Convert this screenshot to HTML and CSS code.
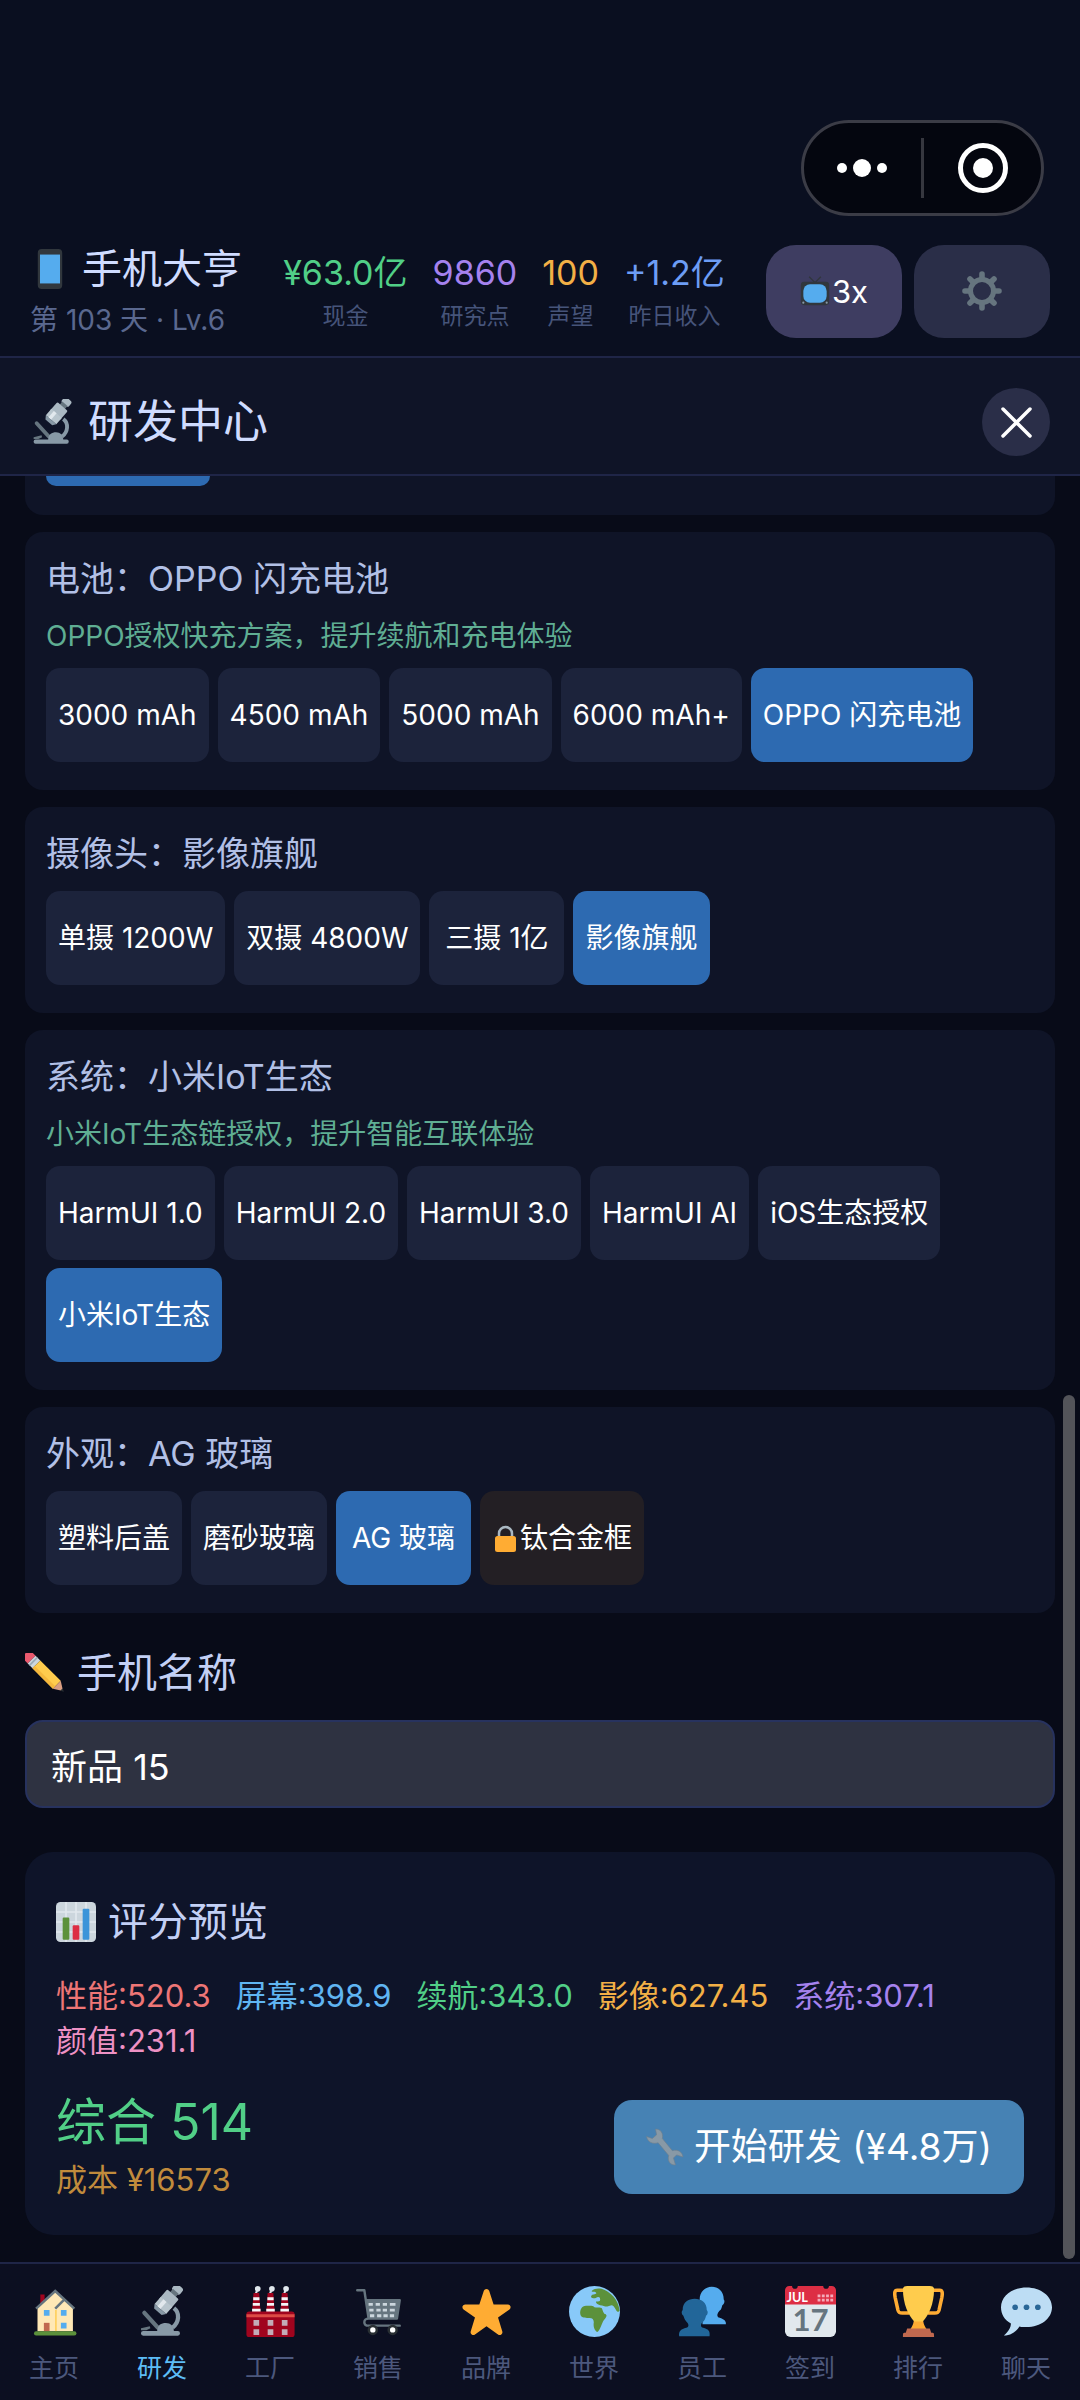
FILE: index.html
```
<!DOCTYPE html>
<html lang="zh-CN">
<head>
    <meta charset="UTF-8">
    <meta name="viewport" content="width=device-width, initial-scale=1.0">
    <title>手机大亨</title>
    <link rel="stylesheet" href="styles.css">
</head>
<body>
    <!-- Shared emoji symbols -->
    <svg class="sprite" aria-hidden="true">
        <symbol id="microscope" viewBox="-2 -1 38 38">
            <path fill="none" stroke="#8899a6" stroke-width="3.2" d="M25.5 15.5c4.6 3.6 4 10.4-1 14.5"/>
            <path stroke="#66757f" stroke-width="3.2" stroke-linecap="round" d="M3.5 19l10 11"/>
            <path fill="#66757f" d="M1 30.5l6.5-1.5.5 1.5-3 1.5H1z"/>
            <path fill="#8899a6" d="M13 33c0-5 3-6.500 6.500-6.500s6 2.500 6 6.500z"/>
            <rect x="1" y="32.5" width="29" height="3.500" rx="1.600" fill="#8899a6"/>
            <g transform="rotate(41 19 12)">
                <rect x="15.2" y="-5" width="7.600" height="6" rx="2" fill="#aab8c2"/>
                <rect x="16.2" y="0" width="5.600" height="4" fill="#66757f"/>
                <rect x="13.3" y="3" width="11.400" height="10" rx="1" fill="#aab8c2"/>
                <rect x="13.3" y="10.5" width="11.400" height="7" fill="#b8c5cd"/>
                <path fill="#e1e8ed" d="M16 10.500h3v7h-3z"/>
                <path fill="#8899a6" d="M13.300 17.500h11.400l-2 2.800h-7.400z"/>
            </g>
        </symbol>
    </svg>

    <div class="app">
        <header class="top">
            <div class="capsule">
                <button class="capsule-btn" aria-label="更多">
                    <svg width="54" height="24" viewBox="0 0 54 24" fill="#fff"><circle cx="6" cy="12" r="5"/><circle cx="26" cy="12" r="9"/><circle cx="46" cy="12" r="5"/></svg>
                </button>
                <span class="capsule-line"></span>
                <button class="capsule-btn" aria-label="退出">
                    <svg width="52" height="52" viewBox="0 0 52 52"><circle cx="26" cy="26" r="22.500" fill="none" stroke="#fff" stroke-width="5"/><circle cx="26" cy="26" r="10" fill="#fff"/></svg>
                </button>
            </div>
            <div class="status">
                <div class="brand">
                    <h1>
                        <svg class="icon-title" viewBox="0 0 36 36"><rect x="7" y="0" width="22" height="36" rx="3.500" fill="#31373d"/><path fill="#55acee" d="M9 5h18v26H9z"/></svg>
                        手机大亨
                    </h1>
                    <p>第 103 天 · Lv.6</p>
                </div>
                <div class="stats">
                    <div class="stat"><b class="green">¥63.0亿</b><span>现金</span></div>
                    <div class="stat"><b class="purple">9860</b><span>研究点</span></div>
                    <div class="stat"><b class="orange">100</b><span>声望</span></div>
                    <div class="stat"><b class="blue">+1.2亿</b><span>昨日收入</span></div>
                </div>
                <div class="tools">
                    <button class="tool speed">
                        <svg class="icon-small" viewBox="0 0 36 36"><path fill="none" stroke="#31373d" stroke-width="1.600" d="M11 1l7 7 7-7"/><rect x="1" y="7" width="34" height="28" rx="4" fill="#31373d"/><rect x="4" y="10" width="28" height="22" rx="8" fill="#55acee"/><circle cx="4" cy="32" r="1.300" fill="#8899a6"/><circle cx="32" cy="32" r="1.300" fill="#8899a6"/></svg>3x
                    </button>
                    <button class="tool" aria-label="设置">
                        <svg class="icon-gear" viewBox="0 0 40 40" stroke="#66757f" fill="none"><circle cx="20" cy="20" r="11.500" stroke-width="5"/><g stroke-width="5.600" stroke-linecap="round"><path d="M20 7V3M20 33v4M7 20H3M33 20h4M10.800 10.800L8 8M29.200 29.200L32 32M10.800 29.200L8 32M29.200 10.800L32 8"/></g></svg>
                    </button>
                </div>
            </div>
        </header>

        <div class="panel-head">
            <h2><svg class="icon-head"><use href="#microscope"/></svg>研发中心</h2>
            <button class="close" aria-label="关闭">
                <svg width="32" height="32" viewBox="0 0 32 32" stroke="#fff" stroke-width="3.500" stroke-linecap="round"><path d="M3 3l27 27M30 3L3 30"/></svg>
            </button>
        </div>

        <main class="content">
            <div class="card card-cut"><div class="chip-cut"></div></div>

            <section class="card">
                <h3>电池：OPPO 闪充电池</h3>
                <p class="desc">OPPO授权快充方案，提升续航和充电体验</p>
                <div class="chips">
                    <button class="chip">3000 mAh</button>
                    <button class="chip">4500 mAh</button>
                    <button class="chip">5000 mAh</button>
                    <button class="chip">6000 mAh+</button>
                    <button class="chip active">OPPO 闪充电池</button>
                </div>
            </section>

            <section class="card">
                <h3>摄像头：影像旗舰</h3>
                <div class="chips">
                    <button class="chip">单摄 1200W</button>
                    <button class="chip">双摄 4800W</button>
                    <button class="chip">三摄 1亿</button>
                    <button class="chip active">影像旗舰</button>
                </div>
            </section>

            <section class="card">
                <h3>系统：小米IoT生态</h3>
                <p class="desc">小米IoT生态链授权，提升智能互联体验</p>
                <div class="chips">
                    <button class="chip">HarmUI 1.0</button>
                    <button class="chip">HarmUI 2.0</button>
                    <button class="chip">HarmUI 3.0</button>
                    <button class="chip">HarmUI AI</button>
                    <button class="chip">iOS生态授权</button>
                    <button class="chip active">小米IoT生态</button>
                </div>
            </section>

            <section class="card">
                <h3>外观：AG 玻璃</h3>
                <div class="chips">
                    <button class="chip">塑料后盖</button>
                    <button class="chip">磨砂玻璃</button>
                    <button class="chip active">AG 玻璃</button>
                    <button class="chip locked">
                        <svg class="icon-lock" viewBox="0 0 28 28"><path fill="none" stroke="#aab8c2" stroke-width="2.500" d="M7 14V9.500a6.500 6.500 0 0 1 13 0V14"/><rect x="3" y="12" width="21" height="16" rx="2.500" fill="#ffac33"/></svg>钛合金框
                    </button>
                </div>
            </section>

            <label class="section-title" for="phone-name">
                <svg class="icon-section" viewBox="0 0 36 36"><g transform="rotate(45 18 18)"><path fill="#ea596e" d="M-4 13h5v10h-5a3 3 0 0 1-3-3v-4a3 3 0 0 1 3-3z"/><path fill="#ccd6dd" d="M1 13h6v10H1z"/><path fill="#99aab5" d="M2.500 13H4v10H2.500z"/><path fill="#ffcc4d" d="M7 13h26v10H7z"/><path fill="#f5b83d" d="M7 20h26v3H7z"/><path fill="#d99e82" d="M33 13l8 5-8 5z"/><path fill="#292f33" d="M39 16.500l3 1.500-3 1.500z"/></g></svg>
                手机名称
            </label>
            <input id="phone-name" class="name-input" type="text" value="新品 15">

            <section class="score">
                <h2 class="section-title">
                    <svg class="icon-section" viewBox="0 0 36 36"><rect width="36" height="36" rx="4" fill="#ccd6dd"/><path stroke="#e1e8ed" stroke-width="1.500" d="M0 9h36M0 18h36M0 27h36M9 0v36M18 0v36M27 0v36"/><rect x="6" y="14" width="6" height="20" rx="1" fill="#5c913b"/><rect x="15" y="21" width="6" height="13" rx="1" fill="#dd2e44"/><rect x="24" y="6" width="6" height="28" rx="1" fill="#3b94d9"/></svg>
                    评分预览
                </h2>
                <div class="scores">
                    <span class="red">性能:520.3</span>
                    <span class="sky">屏幕:398.9</span>
                    <span class="green">续航:343.0</span>
                    <span class="orange">影像:627.45</span>
                    <span class="purple">系统:307.1</span>
                    <span class="pink">颜值:231.1</span>
                </div>
                <div class="score-foot">
                    <div>
                        <div class="total">综合 514</div>
                        <div class="cost">成本 ¥16573</div>
                    </div>
                    <button class="start">
                        <svg class="icon-wrench" viewBox="0 0 36 36"><path fill="#8899a6" stroke="#6e7f8d" stroke-width=".6" d="M9 1c5 0 7.500 4 6.500 9l9.500 11.500c5-1.500 9.500 1 10 6l-6-2-3 3 2 6.500c-5 .5-8-4-6.500-9L11.500 14C6.500 15.500 1.500 13.500.5 8l5.500 2 4-3.500z"/></svg>
                        开始研发 (¥4.8万)
                    </button>
                </div>
            </section>
            <span class="scroll-thumb"></span>
        </main>

        <nav class="tabs">
            <a href="#home" class="tab">
                <svg viewBox="0 0 36 36"><path fill="#a0041e" d="M8 6h3v7H8z"/><path fill="#ffe8b6" d="M6 15L18.500 3.500 31 15v17H6z"/><path fill="#ffcc4d" d="M18.500 17h1v15h-1z"/><path fill="none" stroke="#66757f" stroke-width="1.800" d="M5 16L18.500 3.500 32 16M18.500 16l6-6"/><path fill="#55acee" d="M10.500 17h4v4h-4zM22.500 17h4v4h-4zM22.500 26h4v4h-4z"/><path fill="#c1694f" d="M10.500 26h4v6h-4z"/><rect x="3.500" y="32" width="30" height="3" rx="1.500" fill="#5c913b"/></svg>
                主页
            </a>
            <a href="#research" class="tab current"><svg><use href="#microscope"/></svg>研发</a>
            <a href="#factory" class="tab">
                <svg viewBox="0 0 36 36"><g fill="#e1e8ed"><circle cx="9" cy="2" r="2"/><circle cx="19" cy="2" r="2"/><circle cx="29" cy="2" r="2"/></g><g stroke="#e1e8ed" stroke-width="1.500"><path d="M8.500 3l-1 3M18.500 3l-1 3M28.500 3l-1 3"/></g><g fill="#a0041e"><path d="M6 5h4l1 14H5zM16 5h4l1 14h-6zM26 5h4l1 14h-6z"/><rect x="1" y="18" width="34" height="18" rx="2"/></g><path fill="#f4f7f9" d="M5.800 8h4.400v2H5.800zM5.500 12h5v2h-5zM5 16h6v2H5zM15.800 8h4.400v2h-4.400zM15.500 12h5v2h-5zM15 16h6v2h-6zM25.800 8h4.400v2h-4.400zM25.500 12h5v2h-5zM25 16h6v2h-6z"/><path fill="#dd4b45" d="M1 20h34v2H1z"/><path fill="#ccd6dd" opacity=".8" d="M6 24h4v4H6zM16 24h4v4h-4zM26 24h4v4h-4zM6 30.500h4v4H6zM16 30.500h4v4h-4zM26 30.500h4v4h-4z"/></svg>
                工厂
            </a>
            <a href="#sales" class="tab">
                <svg viewBox="0 0 36 36"><path fill="none" stroke="#66757f" stroke-width="1.700" stroke-linecap="round" stroke-linejoin="round" d="M3 3h5l3 20M9 10h24l-2 13H11c-4 0-4 5 0 5h22"/><path fill="#66757f" d="M9 10h24l-2 13H11z"/><g fill="#ccd6dd"><path d="M11 12h3v2h-3zM16 12h3v2h-3zM21 12h3v2h-3zM26 12h4v2h-4zM11.500 16h3v2h-3zM16.500 16h3v2h-3zM21 16h3v2h-3zM26 16h3.500v2H26zM12 20h3v2h-3zM17 20h3v2h-3zM21.500 20h3v2h-3zM26 20h3v2h-3z"/></g><circle cx="14" cy="31" r="2.800" fill="#fff" stroke="#292f33" stroke-width="1.800"/><circle cx="28" cy="31" r="2.800" fill="#fff" stroke="#292f33" stroke-width="1.800"/></svg>
                销售
            </a>
            <a href="#brand" class="tab">
                <svg viewBox="0 0 36 36"><path fill="#ffac33" d="M27.287 34.627c-.404 0-.806-.124-1.152-.371L18 28.422l-8.135 5.834c-.343.247-.746.371-1.148.371-.408 0-.818-.127-1.165-.383-.693-.504-.98-1.395-.719-2.210l3.034-9.792-8.062-5.681c-.685-.505-.97-1.393-.708-2.203.264-.809 1.016-1.357 1.866-1.363L12.947 12.980l3.179-9.549c.268-.809 1.023-1.353 1.874-1.353.851 0 1.606.545 1.875 1.353L23 13l10.036-.005c.853.006 1.606.554 1.868 1.363.263.81-.022 1.698-.708 2.203l-8.062 5.681 3.034 9.792c.26.815-.027 1.706-.72 2.210-.346.256-.757.383-1.161.383z"/></svg>
                品牌
            </a>
            <a href="#world" class="tab">
                <svg viewBox="0 0 36 36"><circle cx="18" cy="18" r="18" fill="#88c9f9"/><path fill="#5c913b" d="M16 3.500c2-2 5-2 7-1.500 6 2 12 7.500 12.700 15.500-.7 1.500-2 .5-2.700-1-1-2-2-3-3-3l-3 1c-2 0-3-1-5-1-2-.5-3-1-3-2.500 2 0 3 0 3-1.500s-1-2-2-1.500-2 1-3.500.5-1-2 .5-2.500 3-.5 2-1.500-3.500 0-3-1zM12 14c2 0 5-.5 6 1 1 .5 3 0 5 .5 1 1.500 1 4 3 4.500 1.500 1-.5 3-2 5-1 2-2 6-4 7.500-2-1-3-4-2.500-7 0-2-1-3-3-3s-6 .500-6.500-2.500S9 14 12 14z"/><path fill="none" stroke="#88c9f9" stroke-width="1.300" stroke-linecap="round" d="M24 15l3 5 3-1 1-3"/></svg>
                世界
            </a>
            <a href="#staff" class="tab">
                <svg viewBox="0 0 36 36"><path fill="#55acee" d="M34.500 27c.5-3-2.500-4-5.500-5-1-1-.5-3 1-4.500 1.500-1 1.500-2.500 2-4 1.500-1 2-3 1-4C33 3.500 29 .5 24.500.5S16 4 16 9.500s0 6 2 8V27z"/><path fill="#226699" d="M1.500 35.500c-.5-4 1.500-5 5-6 2-.5 2-2.500.5-4-1.500-1.500-2-3-2.500-4.500-1.500-1-1.500-3-.5-4C4 11.500 8 9 12.500 9s8.500 2.500 8.500 8c1 1 1 3-.5 4-.5 2-1 3.500-2.500 4.500-1.500 1.500-1.500 3.500.5 4 3.500 1 5 2 4.500 6z"/></svg>
                员工
            </a>
            <a href="#signin" class="tab">
                <svg viewBox="0 0 36 36"><path fill="#e1e8ed" d="M0 12h36v20a4 4 0 0 1-4 4H4a4 4 0 0 1-4-4z"/><path fill="#dd2e44" d="M3 0h2a2 2 0 0 0 4 0h18a2 2 0 0 0 4 0h2a3 3 0 0 1 3 3v10H0V3a3 3 0 0 1 3-3z"/><g fill="#f4abba"><path d="M23 6h2v2h-2zM26 6h2v2h-2zM29 6h2v2h-2zM32 6h2v2h-2zM23 9h2v2h-2zM26 9h2v2h-2zM29 9h2v2h-2zM32 9h2v2h-2z"/></g><text class="cal-month" x="1" y="11">JUL</text><text class="cal-day" x="18" y="32">17</text></svg>
                签到
            </a>
            <a href="#rank" class="tab">
                <svg viewBox="0 0 36 36"><path fill="none" stroke="#ffac33" stroke-width="2.500" stroke-linejoin="round" d="M9 3H3c-2 0-2 2-1.500 5l2 9c.5 2 1.500 2 3 2h5M27 3h6c2 0 2 2 1.500 5l-2 9c-.5 2-1.500 2-3 2h-5"/><path fill="#ffac33" d="M15 20h6c0 6 1 8 3 11H12c2-3 3-5 3-11z"/><path fill="#ffcc4d" d="M7 2c0-1 1-2 3-2h16c2 0 3 1 3 2 0 11-4 19-8 23h-6C11 21 7 13 7 2z"/><path fill="#c1694f" d="M10 30h16l1 3h1c1 0 1 1 1 3H7c0-2 0-3 1-3h1z"/></svg>
                排行
            </a>
            <a href="#chat" class="tab">
                <svg viewBox="0 0 36 36"><path fill="#bdddf4" d="M18 1C8 1 0 7 0 15c0 5 2.500 9 7 11.500 0 3-2 6-5 8.500 5 0 9-3 11-6.500 2 .5 3 .5 5 .5 10 0 18-6 18-14S28 1 18 1z"/><g fill="#2a6797"><circle cx="10" cy="15" r="2"/><circle cx="18" cy="15" r="2"/><circle cx="26" cy="15" r="2"/></g></svg>
                聊天
            </a>
        </nav>
    </div>
</body>
</html>
```
FILE: styles.css
```
* {
    box-sizing: border-box;
}
body {
    margin: 0;
    background: #080b18;
    color: #fff;
    font-family: Inter, "Noto Sans CJK SC", sans-serif;
    font-weight: 400;
}
h1, h2, h3, p {
    margin: 0;
    font-weight: 400;
}
button, input {
    font: inherit;
    color: inherit;
    border: none;
}
button {
    cursor: pointer;
}
svg {
    flex-shrink: 0;
}
.sprite {
    position: absolute;
    width: 0;
    height: 0;
}
.app {
    min-height: 100vh;
    display: flex;
    flex-direction: column;
}

/* top bar */
.top {
    padding: 120px 30px 14px;
    background: #0a0f20;
    border-bottom: 2px solid #1f2547;
}
.capsule {
    width: 243px;
    height: 96px;
    margin: 0 6px 24px auto;
    display: flex;
    align-items: center;
    background: #04060f;
    border: 3px solid #3b3c46;
    border-radius: 48px;
}
.capsule-btn {
    flex: 1;
    display: flex;
    justify-content: center;
    padding: 0;
    background: none;
}
.capsule-line {
    width: 3px;
    height: 60px;
    background: #36373f;
}
.status {
    display: flex;
    align-items: center;
    justify-content: space-between;
}
.brand h1 {
    display: flex;
    align-items: center;
    gap: 12px;
    font-size: 40px;
    line-height: 58px;
    color: #cfdcff;
}
.icon-title {
    width: 40px;
    height: 40px;
}
.brand p {
    font-size: 28px;
    line-height: 44px;
    color: #5a688f;
}
.stats {
    display: flex;
    gap: 25px;
}
.stat {
    display: flex;
    flex-direction: column;
    align-items: center;
}
.stat b {
    font-weight: 400;
    font-size: 34px;
    line-height: 50px;
}
.stat span {
    font-size: 23px;
    line-height: 36px;
    color: #46547a;
}
.green { color: #51cf87; }
.purple { color: #a582ee; }
.orange { color: #f3b046; }
.blue { color: #6d9df5; }
.red { color: #ee7676; }
.sky { color: #60b5f2; }
.pink { color: #ee91c4; }
.tools {
    display: flex;
    gap: 12px;
}
.tool {
    width: 136px;
    height: 93px;
    display: flex;
    align-items: center;
    justify-content: center;
    gap: 2px;
    padding: 0;
    font-size: 31px;
    background: #2a2e48;
    border-radius: 30px;
}
.speed {
    background: #3e3d61;
}
.icon-small {
    width: 30px;
    height: 30px;
}
.icon-gear {
    width: 40px;
    height: 40px;
}

/* panel title */
.panel-head {
    display: flex;
    align-items: center;
    justify-content: space-between;
    padding: 30px 30px 18px;
    background: #0f1427;
    border-bottom: 2px solid #1f2547;
}
.panel-head h2 {
    display: flex;
    align-items: center;
    gap: 12px;
    font-size: 45px;
    line-height: 68px;
    color: #cfdcff;
}
.icon-head {
    width: 46px;
    height: 46px;
}
.close {
    width: 68px;
    height: 68px;
    display: flex;
    align-items: center;
    justify-content: center;
    padding: 0;
    background: #2a2e48;
    border-radius: 50%;
}

/* content */
.content {
    position: relative;
    flex: 1;
    padding: 0 25px 20px;
}
.card {
    margin-bottom: 17px;
    padding: 22px 21px 28px;
    background: #0f1427;
    border-radius: 18px;
}
.card-cut {
    padding: 0 21px 29px;
    border-radius: 0 0 18px 18px;
}
.chip-cut {
    width: 164px;
    height: 10px;
    background: #2d6ab1;
    border-radius: 0 0 12px 12px;
}
.card h3 {
    margin-bottom: 12px;
    font-size: 34px;
    line-height: 50px;
    color: #b2c0e6;
}
.desc {
    margin-bottom: 12px;
    font-size: 28px;
    line-height: 40px;
    color: #5fae93;
}
.chips {
    display: flex;
    flex-wrap: wrap;
    gap: 8px 9px;
}
.chip {
    min-width: 135px;
    height: 94px;
    display: flex;
    align-items: center;
    justify-content: center;
    padding: 0 12px;
    font-size: 28px;
    line-height: 40px;
    background: #1c233b;
    border-radius: 14px;
}
.chip.active {
    background: #2d6ab1;
}
.chip.locked {
    background: #231f24;
}
.icon-lock {
    width: 28px;
    height: 28px;
}
.section-title {
    display: flex;
    align-items: center;
    gap: 12px;
    font-size: 40px;
    line-height: 58px;
    color: #c3d0f5;
}
label.section-title {
    padding: 14px 0 18px;
}
.icon-section {
    width: 40px;
    height: 40px;
}
.name-input {
    display: block;
    width: 100%;
    height: 88px;
    margin-bottom: 44px;
    padding: 0 24px;
    font-size: 36px;
    background: #2e3241;
    border: 2px solid #27325e;
    border-radius: 18px;
}

/* score preview */
.score {
    padding: 41px 31px 30px;
    background: #0e1429;
    border-radius: 28px;
}
.scores {
    display: flex;
    flex-wrap: wrap;
    gap: 0 25px;
    margin: 22px 0 26px;
    font-size: 31px;
    line-height: 45px;
}
.score-foot {
    display: flex;
    align-items: center;
    justify-content: space-between;
}
.total {
    font-size: 50px;
    line-height: 66px;
    color: #51cf87;
}
.cost {
    font-size: 31px;
    line-height: 50px;
    color: #c18b3c;
}
.start {
    height: 94px;
    display: flex;
    align-items: center;
    gap: 10px;
    padding: 0 32px;
    font-size: 37px;
    line-height: 50px;
    background: #4682b4;
    border-radius: 18px;
}
.icon-wrench {
    width: 38px;
    height: 38px;
}
.scroll-thumb {
    position: absolute;
    top: 919px;
    right: 5px;
    bottom: 3px;
    width: 12px;
    background: #535459;
    border-radius: 6px;
}

/* bottom tabs */
.tabs {
    display: flex;
    height: 138px;
    background: #0c0f21;
    border-top: 2px solid #1f2547;
}
.tab {
    flex: 1;
    display: flex;
    flex-direction: column;
    align-items: center;
    padding-top: 22px;
    font-size: 25px;
    line-height: 62px;
    color: #4c587d;
    text-decoration: none;
}
.tab svg {
    width: 51px;
    height: 51px;
}
.tab.current {
    color: #5dbcf5;
}
.cal-month {
    font: 700 9px Lato, sans-serif;
    fill: #fff;
}
.cal-day {
    font: 700 22px Lato, sans-serif;
    fill: #66757f;
    text-anchor: middle;
}
```
